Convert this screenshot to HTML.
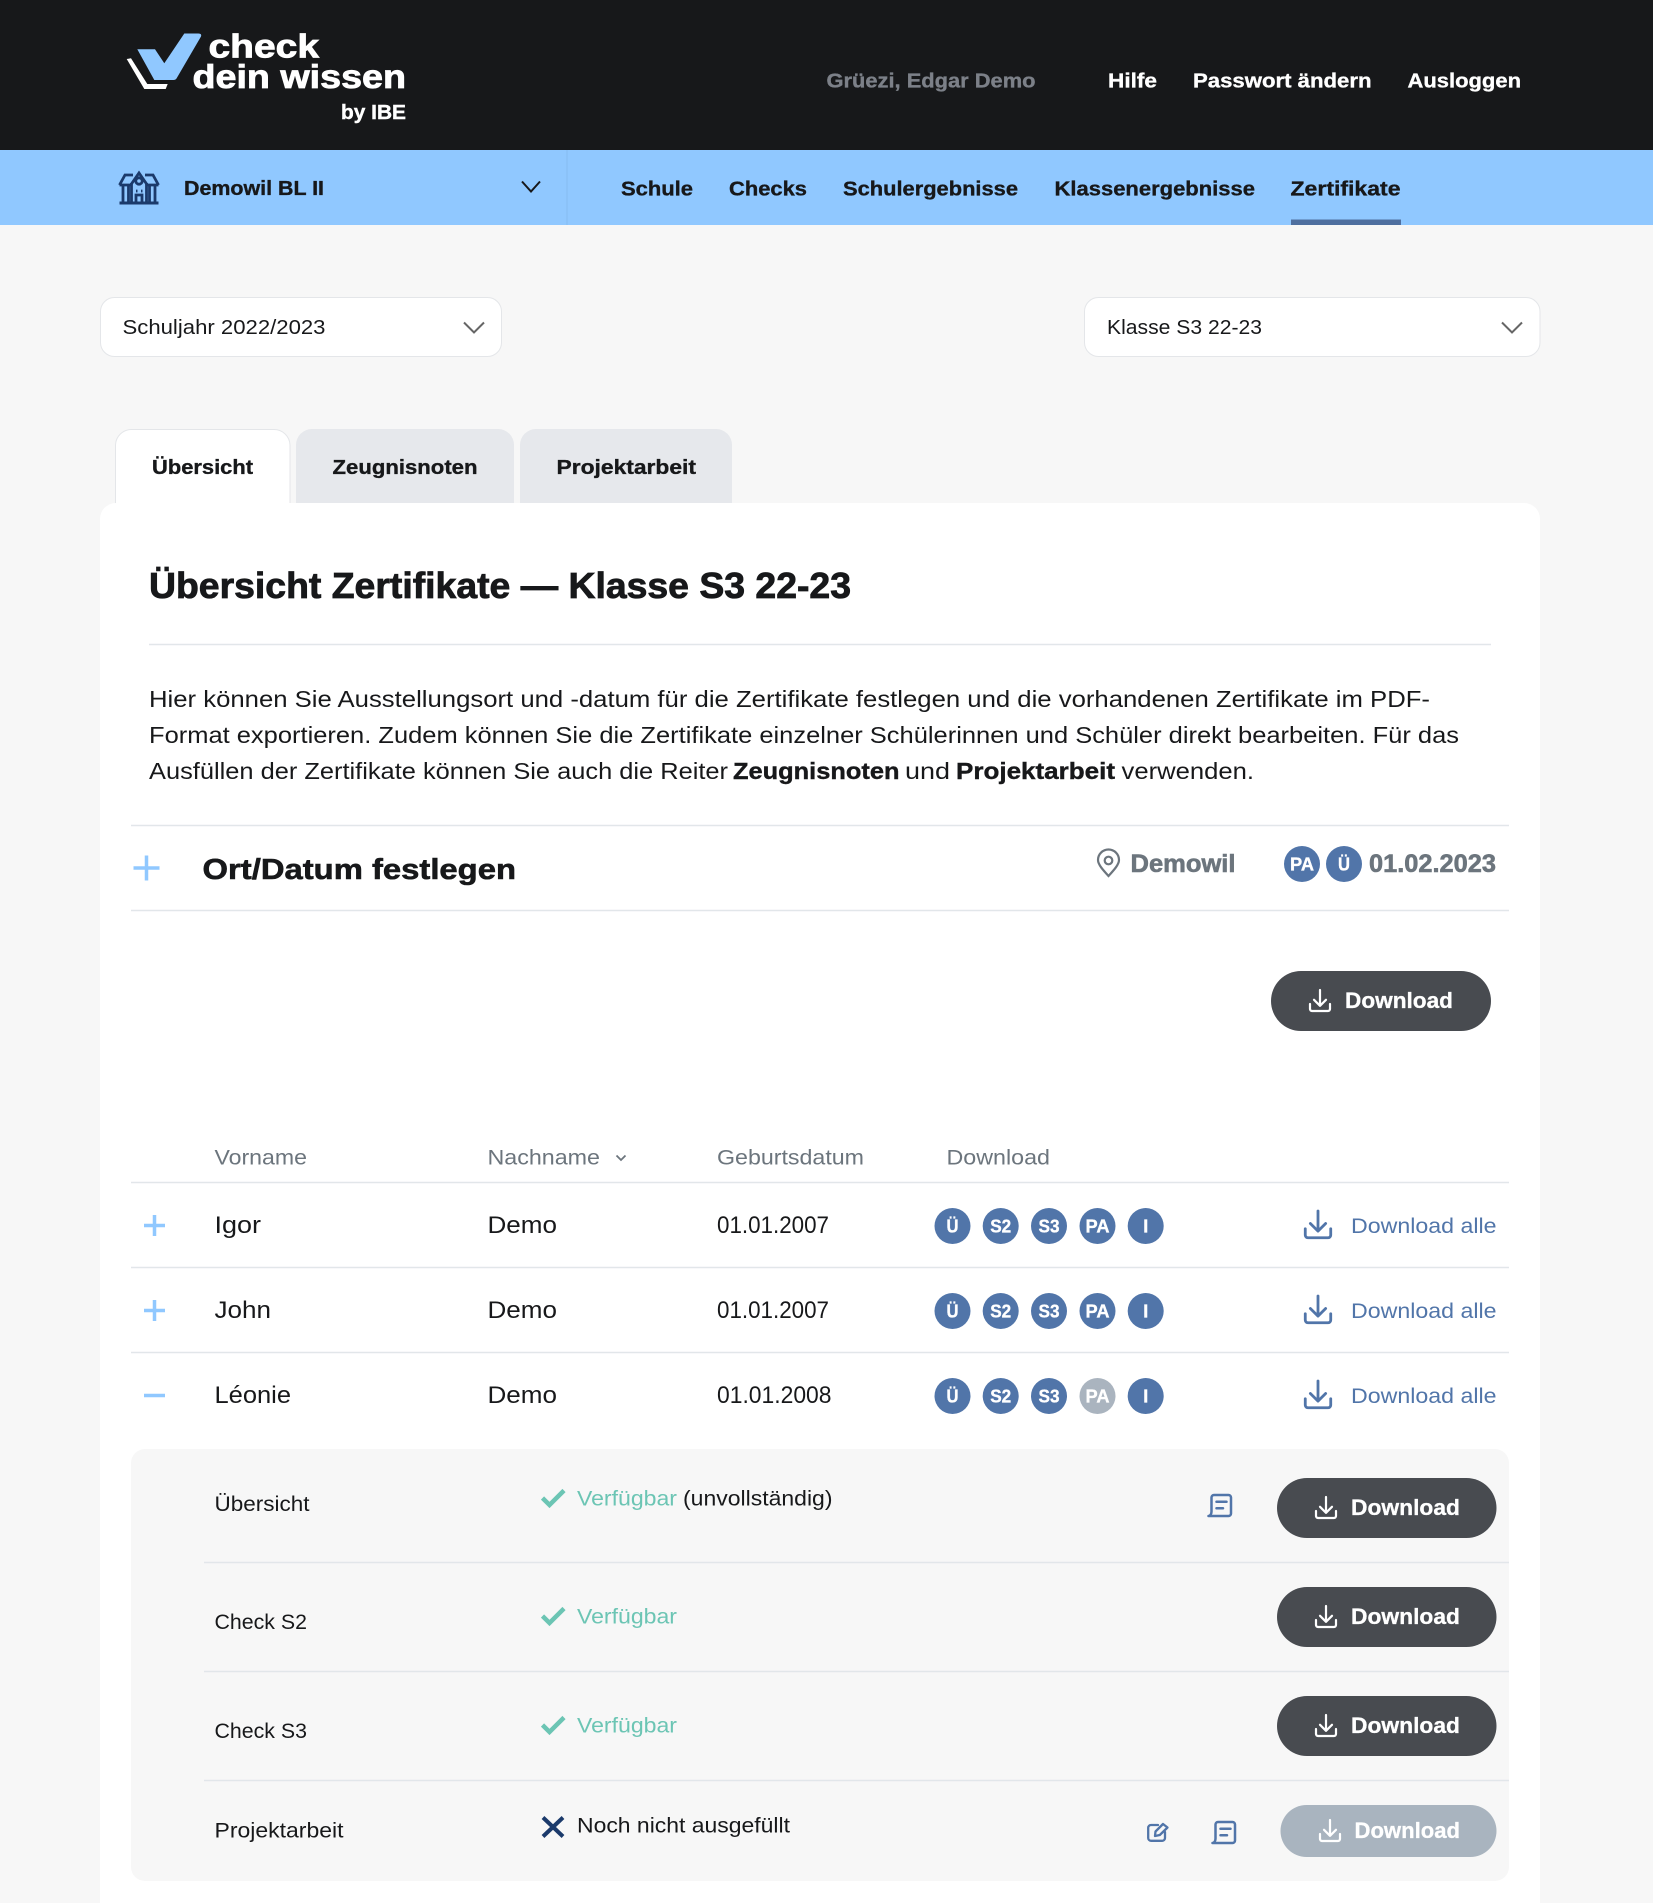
<!DOCTYPE html>
<html lang="de">
<head>
<meta charset="utf-8">
<title>Übersicht Zertifikate</title>
<style>
html,body{margin:0;padding:0;background:#f7f7f7;width:1653px;height:1903px;overflow:hidden}
svg{display:block}
text{font-family:"Liberation Sans",sans-serif;fill:#17181a}
.b{font-weight:700;stroke:#17181a;stroke-width:.4}
.n20{font-size:20px;font-weight:700;stroke:#17181a;stroke-width:.35}
.t{font-size:24px}
.p{font-size:23.5px}
.s{font-size:21px}
.g{fill:#6c757d}
.b.g{stroke:#6c757d}
.bl{fill:#5175a9}
.tl{fill:#6cc5b4}
.w{fill:#fff}
.n20.w,.b.w{stroke:#fff}
.bd{font-size:18px;font-weight:700;fill:#fff;stroke:#fff;stroke-width:.35;text-anchor:middle}
.dl{font-size:22px;font-weight:700;fill:#fff;stroke:#fff;stroke-width:.3}
.ln{stroke:#e2e6ea;stroke-width:1.5}
</style>
</head>
<body>
<svg xmlns="http://www.w3.org/2000/svg" width="1653" height="1903" viewBox="0 0 1653 1903">
<defs>
<symbol id="dl" viewBox="0 0 22 22" overflow="visible"><path d="M11 0V15.5M5 9.8l6 6 6-6M1 14v5a2 2 0 0 0 2 2h16a2 2 0 0 0 2-2v-5" fill="none" stroke="currentColor" stroke-width="2.200" stroke-linecap="round" stroke-linejoin="round"/></symbol>
<symbol id="doc" viewBox="0 0 25 23" overflow="visible"><path d="M4.500 16.500V3.500A2.500 2.500 0 0 1 7 1h14.500A2.500 2.500 0 0 1 24 3.500v16a2.500 2.500 0 0 1-2.500 2.500H1.500C3.500 22 4.500 19.500 4.500 17.500zM9.500 7.700H19.500M9.500 14.300H16" fill="none" stroke="#5175a9" stroke-width="2.500" stroke-linecap="round" stroke-linejoin="round"/></symbol>
<symbol id="chk" viewBox="0 0 25 18" overflow="visible"><path d="M1.500 9L8.500 16 23 1.500" fill="none" stroke="#6cc5b4" stroke-width="4.500"/></symbol>
</defs>

<!-- header -->
<rect width="1653" height="150" fill="#17181a"/>
<path d="M184.300 33.500H198.500Q202 33.500 201 36.500L176.500 78.500Q175.500 80 173.500 80H154.300L137.300 49.300H155L164.300 63.300Z" fill="#90c8ff"/>
<path d="M126.700 59L131 58.300 147.300 84H167.700L165.700 89H144.300Z" fill="#fff"/>
<text x="208.500" y="57.500" font-size="33" class="b w" style="stroke-width:.8" textLength="110.500" lengthAdjust="spacingAndGlyphs">check</text>
<text x="192.500" y="88" font-size="33" class="b w" style="stroke-width:.8" textLength="213.500" lengthAdjust="spacingAndGlyphs">dein wissen</text>
<text x="341" y="119" font-size="20" class="b w" textLength="65" lengthAdjust="spacingAndGlyphs">by IBE</text>
<text x="826.500" y="87.500" class="n20" style="fill:#7c8088;stroke:#7c8088" textLength="209" lengthAdjust="spacingAndGlyphs">Grüezi, Edgar Demo</text>
<text x="1108" y="87.500" class="n20 w" textLength="49" lengthAdjust="spacingAndGlyphs">Hilfe</text>
<text x="1193" y="87.500" class="n20 w" textLength="178.500" lengthAdjust="spacingAndGlyphs">Passwort ändern</text>
<text x="1407.500" y="87.500" class="n20 w" textLength="113.500" lengthAdjust="spacingAndGlyphs">Ausloggen</text>

<!-- nav -->
<rect y="150" width="1653" height="75" fill="#90c8ff"/>
<line x1="567" y1="150" x2="567" y2="225" stroke="#86bbf0" stroke-width="1"/>
<g fill="none" stroke="#1b3a6b" stroke-width="2.800">
<path d="M119.500 203H158.500" stroke-width="3"/>
<path d="M119.500 185L125 175H133M145 175H153L158.500 185M119.500 185H130M148 185H158.500M130 186L139 173 148 186"/>
<path d="M123 185V203M128.500 185V203M149.500 185V203M155 185V203M131.500 183V203M146.500 183V203"/>
<circle cx="139" cy="181" r="3.200"/>
<path d="M136 203V195H142V203"/>
<path d="M136 191h1.500M141 191h1.500"/>
</g>
<text x="184" y="195" class="n20" textLength="140" lengthAdjust="spacingAndGlyphs">Demowil BL II</text>
<path d="M522 181.500L531 191.500 540 181.500" fill="none" stroke="#17181a" stroke-width="2"/>
<text x="621" y="195.500" class="n20" textLength="72" lengthAdjust="spacingAndGlyphs">Schule</text>
<text x="729" y="195.500" class="n20" textLength="78" lengthAdjust="spacingAndGlyphs">Checks</text>
<text x="843" y="195.500" class="n20" textLength="175" lengthAdjust="spacingAndGlyphs">Schulergebnisse</text>
<text x="1054.500" y="195.500" class="n20" textLength="200.500" lengthAdjust="spacingAndGlyphs">Klassenergebnisse</text>
<text x="1290.500" y="195.500" class="n20" textLength="110" lengthAdjust="spacingAndGlyphs">Zertifikate</text>
<rect x="1291" y="219.500" width="110" height="5.500" fill="#4f6f9f"/>

<!-- selects -->
<rect x="100.500" y="297.500" width="401" height="59" rx="14" fill="#fff" stroke="#e4e6e9"/>
<text x="122.500" y="334" font-size="20" textLength="203" lengthAdjust="spacingAndGlyphs">Schuljahr 2022/2023</text>
<path d="M464 322.500L474 332.500 484 322.500" fill="none" stroke="#666" stroke-width="2"/>
<rect x="1084.500" y="297.500" width="455.500" height="59" rx="14" fill="#fff" stroke="#e4e6e9"/>
<text x="1107" y="334" font-size="20" textLength="155" lengthAdjust="spacingAndGlyphs">Klasse S3 22-23</text>
<path d="M1502 322.500L1512 332.500 1522 322.500" fill="none" stroke="#666" stroke-width="2"/>

<!-- tabs -->
<path d="M115.500 510V445A16 16 0 0 1 131.500 429.500H274A16 16 0 0 1 290 445V510Z" fill="#fff" stroke="#e4e6e9"/>
<path d="M296 510V445A16 16 0 0 1 312 429H498A16 16 0 0 1 514 445V510Z" fill="#e6e8ec"/>
<path d="M520 510V445A16 16 0 0 1 536 429H716A16 16 0 0 1 732 445V510Z" fill="#e6e8ec"/>
<text x="152" y="474" class="n20" textLength="101" lengthAdjust="spacingAndGlyphs">Übersicht</text>
<text x="332.500" y="474" class="n20" textLength="145" lengthAdjust="spacingAndGlyphs">Zeugnisnoten</text>
<text x="556.500" y="474" class="n20" textLength="139.500" lengthAdjust="spacingAndGlyphs">Projektarbeit</text>

<!-- card -->
<path d="M100 1903V519A16 16 0 0 1 116 503H1524A16 16 0 0 1 1540 519V1903Z" fill="#fff"/>
<text x="149" y="598" font-size="36" class="b" style="stroke-width:.8" textLength="702" lengthAdjust="spacingAndGlyphs">Übersicht Zertifikate — Klasse S3 22-23</text>
<line x1="149" y1="644.500" x2="1491" y2="644.500" class="ln"/>

<text x="149" y="707" class="p" textLength="1281" lengthAdjust="spacingAndGlyphs">Hier können Sie Ausstellungsort und -datum für die Zertifikate festlegen und die vorhandenen Zertifikate im PDF-</text>
<text x="149" y="743" class="p" textLength="1310" lengthAdjust="spacingAndGlyphs">Format exportieren. Zudem können Sie die Zertifikate einzelner Schülerinnen und Schüler direkt bearbeiten. Für das</text>
<text x="149" y="779" class="p" textLength="579" lengthAdjust="spacingAndGlyphs">Ausfüllen der Zertifikate können Sie auch die Reiter</text>
<text x="733" y="779" class="p b" textLength="166.500" lengthAdjust="spacingAndGlyphs">Zeugnisnoten</text>
<text x="905" y="779" class="p" textLength="45" lengthAdjust="spacingAndGlyphs">und</text>
<text x="956" y="779" class="p b" textLength="159" lengthAdjust="spacingAndGlyphs">Projektarbeit</text>
<text x="1121.500" y="779" class="p" textLength="132.500" lengthAdjust="spacingAndGlyphs">verwenden.</text>

<!-- Ort/Datum -->
<line x1="131" y1="825.500" x2="1509" y2="825.500" class="ln"/>
<line x1="131" y1="910.500" x2="1509" y2="910.500" class="ln"/>
<path d="M146.500 855.500V880.500M133.500 868H159.500" stroke="#90c8ff" stroke-width="3.500" fill="none"/>
<text x="202.500" y="879" font-size="29" class="b" style="stroke-width:.6" textLength="313.500" lengthAdjust="spacingAndGlyphs">Ort/Datum festlegen</text>
<path d="M1108.500 876C1103 870 1098 864.500 1098 860A10.500 10.500 0 0 1 1119 860C1119 864.500 1114 870 1108.500 876Z" fill="none" stroke="#6c757d" stroke-width="2.200"/>
<circle cx="1108.500" cy="860.500" r="3.800" fill="none" stroke="#6c757d" stroke-width="2.200"/>
<text x="1130.500" y="872" font-size="25" class="b g" style="stroke-width:.6" textLength="105" lengthAdjust="spacingAndGlyphs">Demowil</text>
<circle cx="1302" cy="864" r="18" fill="#5175a9"/>
<text x="1302" y="870.500" class="bd" textLength="24" lengthAdjust="spacingAndGlyphs">PA</text>
<circle cx="1344" cy="864" r="18" fill="#5175a9"/>
<text x="1344" y="870.500" class="bd" textLength="12" lengthAdjust="spacingAndGlyphs">Ü</text>
<text x="1369" y="872" font-size="25" class="b g" style="stroke-width:.6" textLength="127" lengthAdjust="spacingAndGlyphs">01.02.2023</text>

<!-- top download -->
<rect x="1271" y="971" width="220" height="60" rx="30" fill="#484b50"/>
<use href="#dl" x="1309" y="990" width="22" height="22" color="#fff"/>
<text x="1345" y="1008" class="dl" textLength="108" lengthAdjust="spacingAndGlyphs">Download</text>

<!-- table head -->
<text x="214.500" y="1164.500" class="s g" textLength="92.500" lengthAdjust="spacingAndGlyphs">Vorname</text>
<text x="487.500" y="1164.500" class="s g" textLength="112.500" lengthAdjust="spacingAndGlyphs">Nachname</text>
<path d="M616.500 1155.500L621 1160 625.500 1155.500" fill="none" stroke="#6c757d" stroke-width="1.800"/>
<text x="717" y="1164.500" class="s g" textLength="147" lengthAdjust="spacingAndGlyphs">Geburtsdatum</text>
<text x="946.500" y="1164.500" class="s g" textLength="103.500" lengthAdjust="spacingAndGlyphs">Download</text>
<line x1="131" y1="1182.500" x2="1509" y2="1182.500" class="ln"/>
<line x1="131" y1="1267.500" x2="1509" y2="1267.500" class="ln"/>
<line x1="131" y1="1352.500" x2="1509" y2="1352.500" class="ln"/>

<!-- row 1 -->
<path d="M154.500 1215V1236M144 1225.500H165" stroke="#90c8ff" stroke-width="3.500" fill="none"/>
<text x="214.500" y="1233" class="t" textLength="46.500" lengthAdjust="spacingAndGlyphs">Igor</text>
<text x="487.500" y="1233" class="t" textLength="69.500" lengthAdjust="spacingAndGlyphs">Demo</text>
<text x="717" y="1233" class="t" textLength="112" lengthAdjust="spacingAndGlyphs">01.01.2007</text>
<g><circle cx="952.500" cy="1226" r="18" fill="#5175a9"/><text x="952.500" y="1232.700" class="bd" textLength="12" lengthAdjust="spacingAndGlyphs">Ü</text>
<circle cx="1000.700" cy="1226" r="18" fill="#5175a9"/><text x="1000.700" y="1232.700" class="bd" textLength="21" lengthAdjust="spacingAndGlyphs">S2</text>
<circle cx="1049" cy="1226" r="18" fill="#5175a9"/><text x="1049" y="1232.700" class="bd" textLength="21" lengthAdjust="spacingAndGlyphs">S3</text>
<circle cx="1097.500" cy="1226" r="18" fill="#5175a9"/><text x="1097.500" y="1232.700" class="bd" textLength="24" lengthAdjust="spacingAndGlyphs">PA</text>
<circle cx="1145.700" cy="1226" r="18" fill="#5175a9"/><text x="1145.700" y="1232.700" class="bd">I</text></g>
<use href="#dl" x="1304" y="1211" width="28" height="28" color="#5175a9"/>
<text x="1351" y="1233.200" class="s bl" textLength="145.500" lengthAdjust="spacingAndGlyphs">Download alle</text>

<!-- row 2 -->
<path d="M154.500 1300V1321M144 1310.500H165" stroke="#90c8ff" stroke-width="3.500" fill="none"/>
<text x="214.500" y="1318" class="t" textLength="56.500" lengthAdjust="spacingAndGlyphs">John</text>
<text x="487.500" y="1318" class="t" textLength="69.500" lengthAdjust="spacingAndGlyphs">Demo</text>
<text x="717" y="1318" class="t" textLength="112" lengthAdjust="spacingAndGlyphs">01.01.2007</text>
<g><circle cx="952.500" cy="1311" r="18" fill="#5175a9"/><text x="952.500" y="1317.700" class="bd" textLength="12" lengthAdjust="spacingAndGlyphs">Ü</text>
<circle cx="1000.700" cy="1311" r="18" fill="#5175a9"/><text x="1000.700" y="1317.700" class="bd" textLength="21" lengthAdjust="spacingAndGlyphs">S2</text>
<circle cx="1049" cy="1311" r="18" fill="#5175a9"/><text x="1049" y="1317.700" class="bd" textLength="21" lengthAdjust="spacingAndGlyphs">S3</text>
<circle cx="1097.500" cy="1311" r="18" fill="#5175a9"/><text x="1097.500" y="1317.700" class="bd" textLength="24" lengthAdjust="spacingAndGlyphs">PA</text>
<circle cx="1145.700" cy="1311" r="18" fill="#5175a9"/><text x="1145.700" y="1317.700" class="bd">I</text></g>
<use href="#dl" x="1304" y="1296" width="28" height="28" color="#5175a9"/>
<text x="1351" y="1318.200" class="s bl" textLength="145.500" lengthAdjust="spacingAndGlyphs">Download alle</text>

<!-- row 3 -->
<path d="M144 1395.500H165" stroke="#90c8ff" stroke-width="3.500" fill="none"/>
<text x="214.500" y="1403" class="t" textLength="76.500" lengthAdjust="spacingAndGlyphs">Léonie</text>
<text x="487.500" y="1403" class="t" textLength="69.500" lengthAdjust="spacingAndGlyphs">Demo</text>
<text x="717" y="1403" class="t" textLength="114.500" lengthAdjust="spacingAndGlyphs">01.01.2008</text>
<g><circle cx="952.500" cy="1396" r="18" fill="#5175a9"/><text x="952.500" y="1402.700" class="bd" textLength="12" lengthAdjust="spacingAndGlyphs">Ü</text>
<circle cx="1000.700" cy="1396" r="18" fill="#5175a9"/><text x="1000.700" y="1402.700" class="bd" textLength="21" lengthAdjust="spacingAndGlyphs">S2</text>
<circle cx="1049" cy="1396" r="18" fill="#5175a9"/><text x="1049" y="1402.700" class="bd" textLength="21" lengthAdjust="spacingAndGlyphs">S3</text>
<circle cx="1097.500" cy="1396" r="18" fill="#aab4bf"/><text x="1097.500" y="1402.700" class="bd" textLength="24" lengthAdjust="spacingAndGlyphs">PA</text>
<circle cx="1145.700" cy="1396" r="18" fill="#5175a9"/><text x="1145.700" y="1402.700" class="bd">I</text></g>
<use href="#dl" x="1304" y="1381" width="28" height="28" color="#5175a9"/>
<text x="1351" y="1403.200" class="s bl" textLength="145.500" lengthAdjust="spacingAndGlyphs">Download alle</text>

<!-- detail panel -->
<rect x="131" y="1449" width="1378" height="432" rx="14" fill="#f7f7f7"/>
<line x1="204" y1="1562.500" x2="1509" y2="1562.500" class="ln"/>
<line x1="204" y1="1671.500" x2="1509" y2="1671.500" class="ln"/>
<line x1="204" y1="1780.500" x2="1509" y2="1780.500" class="ln"/>

<text x="214.500" y="1511" class="s" textLength="95" lengthAdjust="spacingAndGlyphs">Übersicht</text>
<use href="#chk" x="541" y="1489" width="25" height="18"/>
<text x="577" y="1505.700" class="s tl" textLength="100" lengthAdjust="spacingAndGlyphs">Verfügbar</text>
<text x="683" y="1505.700" class="s" textLength="149.500" lengthAdjust="spacingAndGlyphs">(unvollständig)</text>
<use href="#doc" x="1207" y="1494" width="25" height="23"/>
<rect x="1277" y="1478" width="219.500" height="60" rx="30" fill="#484b50"/>
<use href="#dl" x="1315" y="1497" width="22" height="22" color="#fff"/>
<text x="1351" y="1515" class="dl" textLength="109" lengthAdjust="spacingAndGlyphs">Download</text>

<text x="214.500" y="1629" class="s" textLength="92.500" lengthAdjust="spacingAndGlyphs">Check S2</text>
<use href="#chk" x="541" y="1607" width="25" height="18"/>
<text x="577" y="1623.700" class="s tl" textLength="100" lengthAdjust="spacingAndGlyphs">Verfügbar</text>
<rect x="1277" y="1587" width="219.500" height="60" rx="30" fill="#484b50"/>
<use href="#dl" x="1315" y="1606" width="22" height="22" color="#fff"/>
<text x="1351" y="1624" class="dl" textLength="109" lengthAdjust="spacingAndGlyphs">Download</text>

<text x="214.500" y="1738" class="s" textLength="92.500" lengthAdjust="spacingAndGlyphs">Check S3</text>
<use href="#chk" x="541" y="1716" width="25" height="18"/>
<text x="577" y="1732.700" class="s tl" textLength="100" lengthAdjust="spacingAndGlyphs">Verfügbar</text>
<rect x="1277" y="1696" width="219.500" height="60" rx="30" fill="#484b50"/>
<use href="#dl" x="1315" y="1715" width="22" height="22" color="#fff"/>
<text x="1351" y="1733" class="dl" textLength="109" lengthAdjust="spacingAndGlyphs">Download</text>

<text x="214.500" y="1837.500" class="s" textLength="129" lengthAdjust="spacingAndGlyphs">Projektarbeit</text>
<path d="M543 1817.500L563 1836.500M563 1817.500L543 1836.500" stroke="#1b3a6b" stroke-width="4" fill="none"/>
<text x="577" y="1832.700" class="s" textLength="213" lengthAdjust="spacingAndGlyphs">Noch nicht ausgefüllt</text>
<g transform="translate(1147 1822)" fill="none" stroke="#5175a9" stroke-width="2.300" stroke-linecap="round" stroke-linejoin="round"><path d="M11 3H4A2.800 2.800 0 0 0 1.200 5.800V16A2.800 2.800 0 0 0 4 18.800H15A2.800 2.800 0 0 0 18 16V10"/><path d="M8.500 9.500L16 2 20.500 5.500 12.800 13 8 14Z"/></g>
<use href="#doc" x="1211" y="1821" width="25" height="23"/>
<rect x="1280.500" y="1805" width="216" height="52" rx="26" fill="#a9b4bf"/>
<use href="#dl" x="1319" y="1820" width="22" height="22" color="#fff"/>
<text x="1354.500" y="1838" class="dl" textLength="105.500" lengthAdjust="spacingAndGlyphs">Download</text>
</svg>
</body>
</html>
